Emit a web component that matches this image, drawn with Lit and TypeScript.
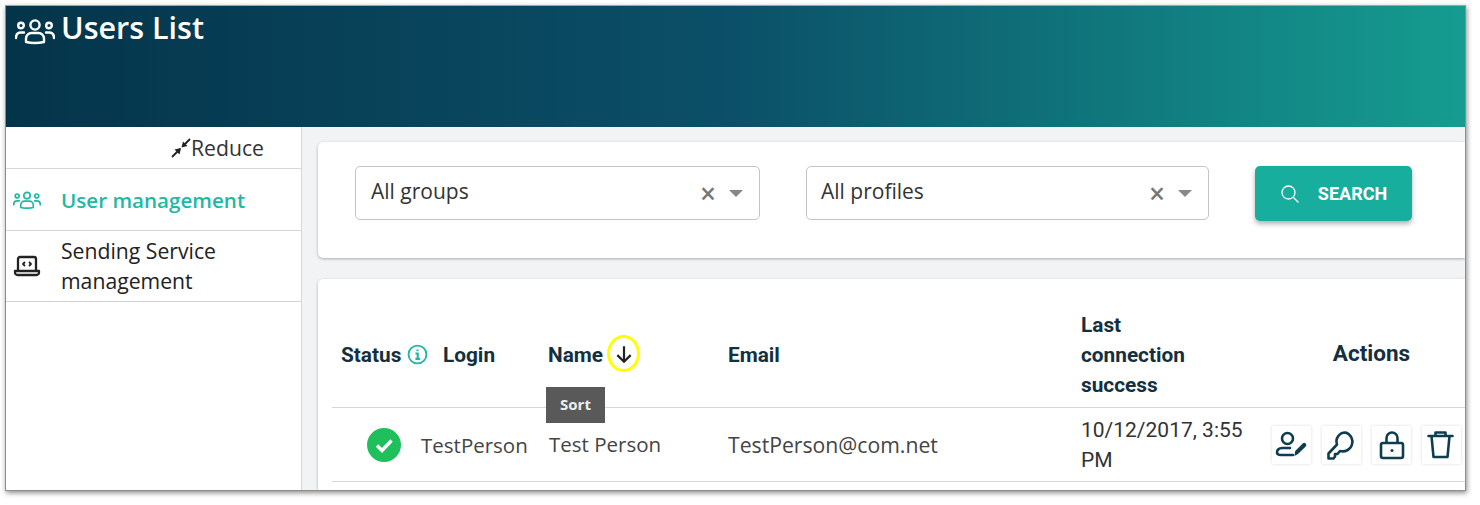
import { LitElement, html, css, svg } from "lit";
import { customElement } from "lit/decorators.js";

const usersIcon = svg`<g fill="none" stroke="currentColor" stroke-width="2.400" stroke-linecap="round" stroke-linejoin="round">
<circle cx="20" cy="8" r="4.600"/><circle cx="6" cy="8.500" r="2.800"/><circle cx="34" cy="8.500" r="2.800"/>
<path d="M11 25v-3.500c0-3 2.500-5.500 5.500-5.500h7c3 0 5.500 2.500 5.500 5.500V25Q20 27 11 25Z"/>
<path d="M1 21c0-3.500 2-5.500 5-5.500h3M39 21c0-3.500-2-5.500-5-5.500h-3"/></g>`;

@customElement("app-root")
export class AppRoot extends LitElement {
  static styles = css`
    :host { display: block; width: 1480px; height: 505px; background: #fff; overflow: hidden; font-family: "Open Sans", sans-serif; }
    .page { padding: 5px 0 0 5px; }
    .window { width: 1459px; height: 484px; box-sizing: content-box; border: 1px solid #8d8d8d; border-top-color: #a5a5a5; box-shadow: 1px 2px 5px rgba(0,0,0,.45); background: #f1f3f5; overflow: hidden; display: flex; flex-direction: column; }
    header { height: 121px; flex: none; background: linear-gradient(90deg, #04344a 0%, #0b5068 50%, #159c90 100%); color: #fff; display: flex; align-items: flex-start; padding: 2px 0 0 9px; gap: 6px; font-size: 30.500px; font-weight: 600; line-height: 38px; box-sizing: border-box; }
    header svg { width: 40px; height: 28px; margin-top: 9px; }
    .body { flex: 1; display: flex; min-height: 0; }
    aside { width: 296px; box-sizing: border-box; flex: none; background: #fff; border-right: 1px solid #d5d7d9; color: #222; font-size: 21.200px; }
    .reduce { height: 41px; display: flex; justify-content: flex-end; align-items: center; padding-right: 37px; color: #333; border-bottom: 1px solid #d9d9d9; }
    .reduce svg { width: 20px; height: 20px; }
    .nav { display: flex; align-items: center; border-bottom: 1px solid #d4d4d4; }
    .nav svg { width: 28px; flex: none; margin-left: 7px; }
    .nav span { margin-left: 20px; line-height: 30px; }
    .nav.on { height: 61px; color: #1fb8a4; }
    .nav.on span { font-weight: 600; font-size: 20.600px; }
    .nav.two { height: 70px; }
    .nav.two svg { margin-left: 7px; height: 24px; }
    main { flex: 1; min-width: 0; padding: 15px 0 0 16px; display: flex; flex-direction: column; gap: 21px; }
    .card { background: #fff; border-radius: 5px 0 0 5px; box-shadow: 0 1px 3px rgba(0,0,0,.3); }
    .filters { height: 116px; flex: none; display: flex; align-items: flex-start; padding: 24px 0 0 37px; box-sizing: border-box; }
    .select { width: 405px; height: 54px; box-sizing: border-box; border: 1px solid #c4c4c4; border-radius: 5px; display: flex; align-items: center; padding: 0 16px 0 15px; font-size: 21px; color: #333; margin-right: 46px; flex: none; }
    .select.narrow { width: 403px; padding-left: 14px; }
    .select .v { flex: 1; padding-bottom: 4px; }
    .select .x { color: #777; font-size: 28px; font-weight: 600; line-height: 1; margin-right: 13px; }
    .select .arrow { width: 0; height: 0; border: 7px solid transparent; border-top: 7px solid #888; border-bottom: 0; }
    .search { width: 157px; height: 55px; flex: none; border-radius: 5px; background: #17ae9d; box-shadow: 0 3px 5px rgba(0,0,0,.3); color: #fff; display: flex; align-items: center; justify-content: center; gap: 18px; font: 700 18px "Roboto", sans-serif; }
    .search svg { width: 20px; height: 20px; }
    .table { flex: 1; position: relative; padding-left: 14px; min-height: 0; overflow: hidden; border-radius: 5px 0 0 0; }
    .head, .row { display: grid; border-bottom: 1px solid #d8d8d8; align-items: center; }
    .head { grid-template-columns: 102px 105px 180px 353px 192px 1fr; height: 129px; font: 700 20.800px/30px "Roboto", sans-serif; color: #14303f; box-sizing: border-box; padding: 23px 0 0 9px; }
    .head > div { display: flex; align-items: center; }
    .status-i { width: 21px; height: 21px; margin-left: 6px; color: #1fb8a4; flex: none; }
    .arrow-wrap { width: 33px; height: 37px; margin: 0 0 2px 4px; display: flex; align-items: center; justify-content: center; border: 3px solid #ffff00; border-radius: 50%; box-sizing: border-box; flex: none; }
    .arrow-wrap svg { width: 20px; height: 20px; color: #222; }
    .last { width: 130px; }
    .actions-h { justify-content: center; padding: 0 0 3px 0; width: 197px; font-size: 22.500px; }
    .tooltip { position: absolute; left: 228px; top: 108px; width: 59px; height: 36px; background: #595959; color: #eee; font: 700 15px/34px "Open Sans", sans-serif; text-align: center; }
    .row { height: 73px; grid-template-columns: 89px 127px 180px 353px 191px 1fr; font-size: 20.500px; color: #444; }
    .check { width: 34px; height: 34px; margin-left: 35px; }
    .name { margin: 0 0 2px 1px; }
    .mail { font-size: 21.200px; }
    .date { font: 400 21px/30px "Roboto", sans-serif; color: #333; width: 180px; }
    .btns { display: flex; gap: 11px; }
    .btn { width: 39px; height: 38px; background: #fff; box-shadow: 0 0 3px rgba(0,0,0,.14); display: flex; align-items: center; justify-content: center; color: #0f3d50; }
    .btn svg { width: 34px; height: 34px; flex: none; }
  `;

  render() {
    return html`<div class="page"><div class="window">
      <header>
        <svg viewBox="0 0 40 28">${usersIcon}</svg>
        <span>Users List</span>
      </header>
      <div class="body">
        <aside>
          <div class="reduce">
            <svg viewBox="0 0 20 20" fill="none" stroke="#222" stroke-width="1.800"><path d="M1 19 9 11M19 1l-7 7"/><path fill="#222" stroke="none" d="M10 10 3.500 11.500 8.500 16.500ZM10.500 9.500 16.500 8 12 3.500Z"/></svg>
            <span>Reduce</span>
          </div>
          <div class="nav on">
            <svg viewBox="0 0 40 28">${usersIcon}</svg>
            <span>User management</span>
          </div>
          <div class="nav two">
            <svg viewBox="0 0 28 24" fill="none" stroke="#222" stroke-width="2.300" stroke-linejoin="round"><path d="M5 16V5a2 2 0 0 1 2-2h14a2 2 0 0 1 2 2v11"/><path d="M2 17h24v1.500a2.500 2.500 0 0 1-2.500 2.500h-19A2.500 2.500 0 0 1 2 18.500Z"/><path stroke-width="1.800" d="M12 8 10 10l2 2M16 8l2 2-2 2"/></svg>
            <span>Sending Service management</span>
          </div>
        </aside>
        <main>
          <section class="card filters">
            <div class="select"><span class="v">All groups</span><span class="x">×</span><span class="arrow"></span></div>
            <div class="select narrow"><span class="v">All profiles</span><span class="x">×</span><span class="arrow"></span></div>
            <div class="search">
              <svg viewBox="0 0 20 20" fill="none" stroke="#fff" stroke-width="1.300"><circle cx="8.500" cy="8.500" r="6.500"/><path d="m13.500 13.500 5 5"/></svg>
              <span>SEARCH</span>
            </div>
          </section>
          <section class="card table">
            <div class="head">
              <div>Status
                <svg class="status-i" viewBox="0 0 20 20" fill="none" stroke="currentColor" stroke-width="1.800"><circle cx="10" cy="10" r="8.500"/><path stroke-width="2" d="M8 9h2.200v5M8 14.200h4.500M10 5.200v1.800"/></svg>
              </div>
              <div>Login</div>
              <div>Name
                <span class="arrow-wrap"><svg viewBox="0 0 18 18" fill="none" stroke="currentColor" stroke-width="2"><path d="M9 2v14M3 10 9 16l6-6"/></svg></span>
              </div>
              <div>Email</div>
              <div class="last">Last connection success</div>
              <div class="actions-h">Actions</div>
            </div>
            <div class="tooltip">Sort</div>
            <div class="row">
              <svg class="check" viewBox="0 0 34 34"><circle cx="17" cy="17" r="17" fill="#1fbf5b"/><path d="m10 17.500 5 5 9.500-10" fill="none" stroke="#fff" stroke-width="3.500"/></svg>
              <div>TestPerson</div>
              <div class="name">Test Person</div>
              <div class="mail">TestPerson@com.net</div>
              <div class="date">10/12/2017, 3:55 PM</div>
              <div class="btns">
                <div class="btn"><svg viewBox="0 0 34 34" fill="none" stroke="currentColor" stroke-width="2.600" stroke-linecap="round"><circle cx="12.500" cy="10.500" r="5.500"/><path d="M15 20H7c-3 0-5 2-5 4.500S4 27 6 27h12"/><path fill="currentColor" stroke="none" d="M19.500 28l.7-5 7.500-7.500a1.800 1.800 0 0 1 3 3L23 26Z"/></svg></div>
                <div class="btn"><svg viewBox="1.500 -0.500 34 34" fill="none" stroke="currentColor" stroke-width="2.600" stroke-linejoin="round"><path d="M22 4a9 9 0 0 0-8.500 12L5 25v5h5l1.500-2v-2.500H14l2.500-3A9 9 0 1 0 22 4Z"/></svg></div>
                <div class="btn"><svg viewBox="0 0 34 34" fill="none" stroke="currentColor" stroke-width="2.600" stroke-linejoin="round"><rect x="6" y="15" width="22" height="15" rx="2"/><path d="M11.500 15v-5a5.500 5.500 0 0 1 11 0v5"/><circle cx="17" cy="22.500" r="1.500" fill="currentColor" stroke="none"/></svg></div>
                <div class="btn"><svg viewBox="1.500 0 34 34" fill="none" stroke="currentColor" stroke-width="2.600" stroke-linejoin="round" stroke-linecap="round"><path d="M5 8h24M12 8V4.500h10V8M8 8l2 21h14l2-21"/></svg></div>
              </div>
            </div>
          </section>
        </main>
      </div>
    </div></div>`;
  }
}
